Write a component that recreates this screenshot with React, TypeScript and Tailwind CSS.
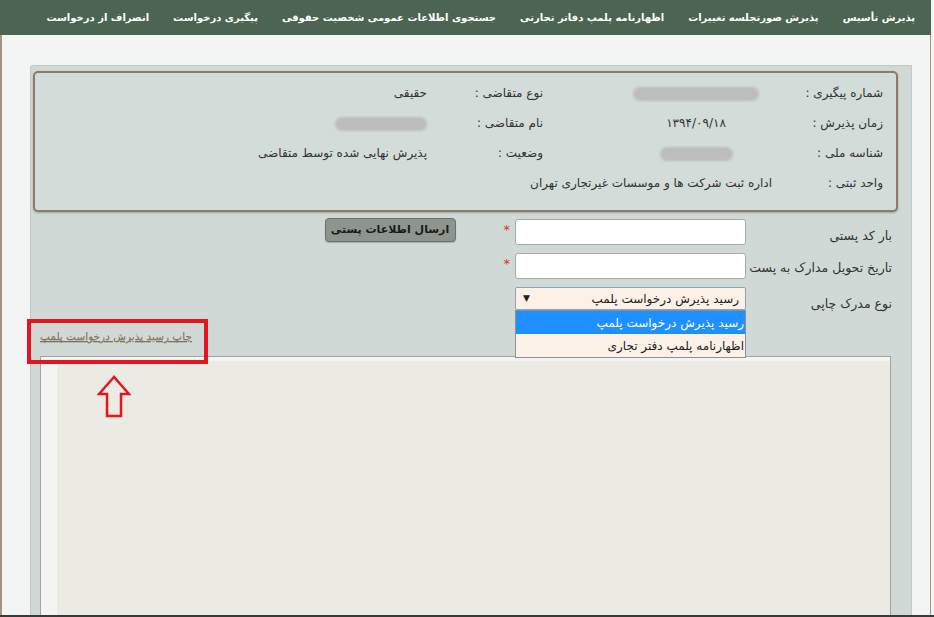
import React from 'react';

const navItems = [
  'پذیرش تأسیس',
  'پذیرش صورتجلسه تغییرات',
  'اظهارنامه پلمپ دفاتر تجارتی',
  'جستجوی اطلاعات عمومی شخصیت حقوقی',
  'پیگیری درخواست',
  'انصراف از درخواست',
];

function Blur({ w }: { w: string }) {
  return <span className={`inline-block h-[14px] ${w} rounded-[7px] bg-[#bdbdbd] blur-[1px] align-middle`} />;
}

function InfoBox() {
  return (
    <div className="ml-[2px] mr-[13px] mt-[5px] rounded-[5px] border-2 border-[#8d7b68] bg-[#d2dcd9] pb-[12px] pr-[13px] pt-[5px] shadow-[0_1px_2px_rgba(0,0,0,0.25)]">
      <div className="grid grid-cols-[92px_190px_58px_100px_16px_1fr] auto-rows-[30px] items-center text-[12px] text-[#333]">
        <div>شماره پیگیری :</div>
        <div className="text-center"><Blur w="w-[126px]" /></div>
        <div />
        <div>نوع متقاضی :</div>
        <div />
        <div>حقیقی</div>

        <div>زمان پذیرش :</div>
        <div className="text-center">۱۳۹۴/۰۹/۱۸</div>
        <div />
        <div>نام متقاضی :</div>
        <div />
        <div><Blur w="w-[92px]" /></div>

        <div>شناسه ملی :</div>
        <div className="text-center"><Blur w="w-[73px]" /></div>
        <div />
        <div>وضعیت :</div>
        <div />
        <div>پذیرش نهایی شده توسط متقاضی</div>

        <div>واحد ثبتی :</div>
        <div className="col-span-5 pr-[19px]">اداره ثبت شرکت ها و موسسات غیرتجاری تهران</div>
      </div>
    </div>
  );
}

function Asterisk() {
  return <span className="mr-[5px] pt-[4px] text-[13px] leading-none text-[#e02b2b]">*</span>;
}

function PostForm() {
  return (
    <div className="mt-[7px] pr-[19px] text-[12.5px] text-[#333]">
      <div className="flex items-start">
        <div className="w-[146px] whitespace-nowrap pt-[8px] leading-[18px]">بار کد پستی</div>
        <input className="h-[26px] w-[231px] rounded-[3px] border border-[#a9a9a9] bg-white" />
        <Asterisk />
        <button className="mr-[48px] mt-[-1px] h-[24px] w-[131px] rounded-[4px] border border-[#6b716c] bg-[#8e958f] text-[11px] font-bold text-[#1a1a1a] shadow-[0_1px_1px_rgba(0,0,0,0.2)]">
          ارسال اطلاعات پستی
        </button>
      </div>
      <div className="mt-[8px] flex items-start">
        <div className="w-[146px] whitespace-nowrap pt-[6px] leading-[18px]">تاریخ تحویل مدارک به پست</div>
        <input className="h-[26px] w-[231px] rounded-[3px] border border-[#a9a9a9] bg-white" />
        <Asterisk />
      </div>
      <div className="mt-[8px] flex items-start">
        <div className="w-[146px] whitespace-nowrap pt-[8px] leading-[18px]">نوع مدرک چاپی</div>
        <div className="relative w-[231px]">
          <div className="flex h-[23px] items-center justify-between rounded-[2px] border border-[#8ea3b8] bg-[#fdf1e7] pl-[7px] pr-[6px] text-[12px] text-[#222]">
            <span>رسید پذیرش درخواست پلمپ</span>
            <span className="text-[9px]">▼</span>
          </div>
          <div className="absolute right-0 top-full z-10 w-[231px] border border-[#8f8f8f] text-[12px]">
            <div className="flex h-[23px] items-center bg-[#1e90ff] pr-[1px] text-white">رسید پذیرش درخواست پلمپ</div>
            <div className="flex h-[23px] items-center bg-[#fdf1e7] pr-[1px] text-[#222]">اظهارنامه پلمپ دفتر تجاری</div>
          </div>
        </div>
      </div>
    </div>
  );
}

export default function App() {
  return (
    <div dir="rtl" className="relative flex h-screen flex-col overflow-hidden border-b-2 border-[#3a3a3a] bg-[#f3f4f4] pr-[3px] font-['DejaVu_Sans',sans-serif]">
      <nav className="flex h-[35px] shrink-0 items-center gap-[24px] bg-[#4b6552] pr-[16px] text-[10px] font-bold text-white whitespace-nowrap">
        {navItems.map((n) => (
          <span key={n}>{n}</span>
        ))}
      </nav>

      <div className="flex flex-1 flex-col border-l-2 border-r border-[#a89381] pt-[30px]">
        <div className="ml-[28px] mr-[18px] flex flex-1 flex-col rounded-tl-[3px] border border-b-0 border-[#c1c9c6] bg-[#d0d9d6]">
          <InfoBox />
          <PostForm />

          <div className="mt-[16px] pl-[9px] text-left text-[10.5px] leading-[14px]">
            <a className="text-[#85704f] underline decoration-[#85704f] [text-shadow:0_1px_0_rgba(0,0,0,0.15)]">چاپ رسید پذیرش درخواست پلمپ</a>
          </div>

          <div className="ml-[9px] mr-[20px] mt-[13px] flex flex-1 flex-col border border-b-0 border-[#a3a3a3] bg-[#f4f4f2] pl-[16px] pt-[4px]">
            <div className="flex-1 bg-[#ecebe3]" />
          </div>
        </div>
      </div>

      {/* annotation overlay */}
      <div className="pointer-events-none absolute left-[27px] top-[319px] h-[45px] w-[181px] border-4 border-[#e3161f]" />
      <svg className="pointer-events-none absolute left-[97px] top-[375px]" width="34" height="43" viewBox="0 0 34 43">
        <path d="M17 2 L2 19 L10 19 L10 41 L24 41 L24 19 L32 19 Z" fill="none" stroke="#e3161f" strokeWidth="2.5" strokeLinejoin="miter" />
      </svg>
    </div>
  );
}
